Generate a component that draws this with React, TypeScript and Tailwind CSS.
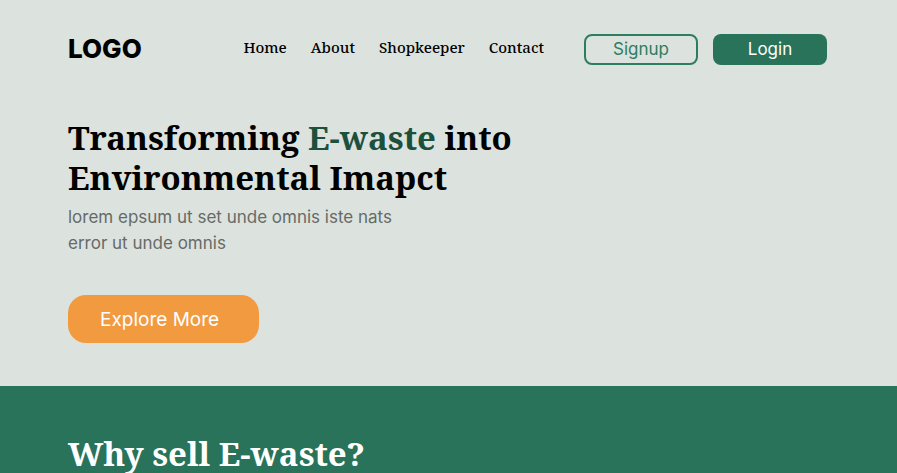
const navLinks = ["Home", "About", "Shopkeeper", "Contact"];

export default function App() {
  return (
    <div className="min-h-screen bg-[#dce2de] font-['Inter',sans-serif] text-black">
      <header className="flex items-center pt-[33px] pr-[70px] pl-[68px]">
        <a href="#" className="text-[26px] leading-8 font-extrabold">
          LOGO
        </a>
        <nav className="ml-auto flex gap-6 pb-1 font-['Noto_Serif','DejaVu_Serif_Condensed',serif] text-[15px] leading-7 font-medium">
          {navLinks.map((label) => (
            <a key={label} href="#">
              {label}
            </a>
          ))}
        </nav>
        <div className="ml-10 flex gap-[15px] pt-px text-[17px] leading-6">
          <button className="flex h-[31px] w-[114px] items-center justify-center rounded-lg border-2 border-[#2f7d60] pb-0.5 text-[#2f7d60]">
            Signup
          </button>
          <button className="flex h-[31px] w-[114px] items-center justify-center rounded-lg bg-[#28735a] pb-0.5 text-white">
            Login
          </button>
        </div>
      </header>

      <main>
        <section className="px-[68px] pt-[53px] pb-[43px]">
          <h1 className="font-['Noto_Serif','DejaVu_Serif_Condensed',serif] text-[33px] leading-10 font-bold">
            Transforming <span className="text-[#1b503d]">E-waste</span> into
            <br />
            Environmental Imapct
          </h1>
          <p className="mt-1.5 text-[17px] leading-[26px] text-[#666b67]">
            lorem epsum ut set unde omnis iste nats
            <br />
            error ut unde omnis
          </p>
          <button className="mt-[39px] h-12 rounded-[18px] bg-[#f29a3f] pt-0.5 pr-10 pl-8 text-[19px] text-white">
            Explore More
          </button>
        </section>
        <section className="bg-[#28735a] px-[68px] pt-12">
          <h2 className="font-['Noto_Serif','DejaVu_Serif_Condensed',serif] text-[33px] leading-10 font-bold text-white">
            Why sell E-waste?
          </h2>
        </section>
      </main>
    </div>
  );
}
